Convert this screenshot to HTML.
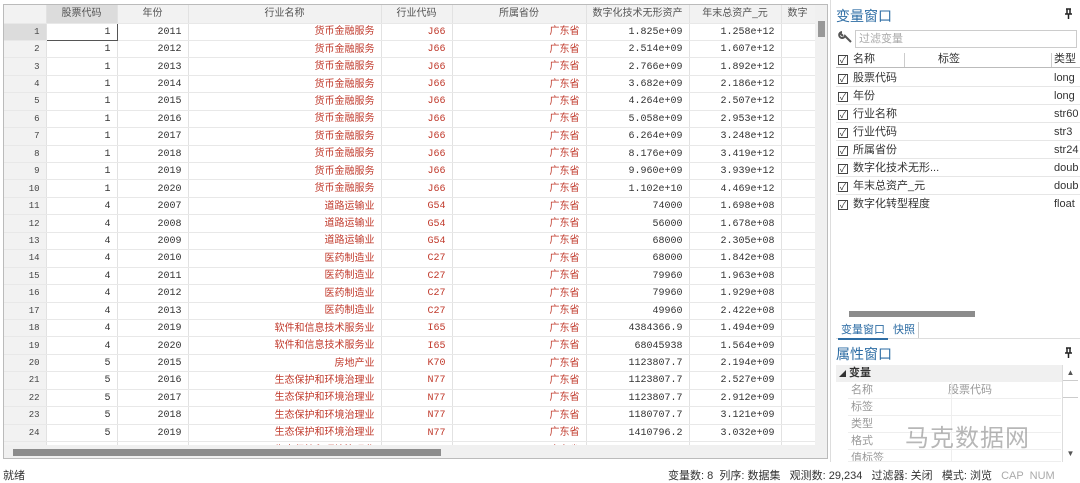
<!DOCTYPE html>
<html><head><meta charset="utf-8"><style>
*{margin:0;padding:0;box-sizing:border-box}
body{width:1080px;height:482px;overflow:hidden;background:#fff;font-family:"Liberation Sans","Noto Sans CJK SC",sans-serif;font-size:11px;color:#333;position:relative}
.grid{position:absolute;left:3px;top:4px;width:825px;height:455px;border:1px solid #bbb;overflow:hidden;background:#fff}
table{border-collapse:collapse;table-layout:fixed;position:absolute;left:0;top:0}
tr{height:17.45px}
td,th{line-height:11px;vertical-align:middle;border-right:1px solid #e2e2e2;border-bottom:1px solid #e8e8e8;padding:1px 6px 0;white-space:nowrap;overflow:hidden;font-weight:normal;font-size:10px;text-align:right;font-family:"Liberation Mono","Noto Sans CJK SC",monospace}
th{background:#f2f2f2;color:#555;text-align:center;font-family:"Liberation Sans","Noto Sans CJK SC",sans-serif;padding:0 6px}
tr.h{height:18px}
td.rn{background:#f2f2f2;color:#444;font-size:9px}
td.r{color:#c0392b;font-family:"Noto Sans CJK SC",sans-serif;padding:0 6px 4px}
td.c{color:#c0392b}
.vs{position:absolute;left:811px;top:0;width:13px;height:440px;background:#f0f0f0}
.vs div{position:absolute;left:3px;top:16px;width:7px;height:16px;background:#999}
.hs{position:absolute;left:0;top:440px;width:824px;height:14px;background:#f0f0f0}
.hs div{position:absolute;left:9px;top:4px;width:428px;height:7px;background:#8c8c8c}
.blue{color:#2e6da4;font-size:14px}
.status{position:absolute;left:0;top:463px;width:1080px;height:19px;font-size:11px;color:#333}
.vrow{position:absolute;left:836px;width:244px;height:18px;border-bottom:1px solid #e6e6e6;font-size:11px;line-height:18px}
.cb{display:inline-block;width:10px;height:10px;border:1px solid #444;margin:0 5px 0 2px;vertical-align:-1px;font-size:9px;line-height:8px;text-align:center}
.prow{position:absolute;left:848px;width:213px;height:17px;border-bottom:1px solid #eee;font-size:11px;color:#999;line-height:17px;padding-left:3px}
</style></head><body>
<div class="grid">
<table>
<colgroup><col style="width:42px"><col style="width:71px"><col style="width:71px"><col style="width:193px"><col style="width:71px"><col style="width:134px"><col style="width:100px"><col style="width:92px"><col style="width:40px"></colgroup>
<tr class="h"><th></th><th style="background:#dcdcdc">股票代码</th><th>年份</th><th>行业名称</th><th>行业代码</th><th>所属省份</th><th>数字化技术无形资产</th><th>年末总资产_元</th><th style="text-align:left">数字</th></tr>
<tr><td class="rn" style="background:#dcdcdc">1</td><td style="border:1.5px solid #555">1</td><td>2011</td><td class="r">货币金融服务</td><td class="c">J66</td><td class="r">广东省</td><td>1.825e+09</td><td>1.258e+12</td><td></td></tr>
<tr><td class="rn">2</td><td>1</td><td>2012</td><td class="r">货币金融服务</td><td class="c">J66</td><td class="r">广东省</td><td>2.514e+09</td><td>1.607e+12</td><td></td></tr>
<tr><td class="rn">3</td><td>1</td><td>2013</td><td class="r">货币金融服务</td><td class="c">J66</td><td class="r">广东省</td><td>2.766e+09</td><td>1.892e+12</td><td></td></tr>
<tr><td class="rn">4</td><td>1</td><td>2014</td><td class="r">货币金融服务</td><td class="c">J66</td><td class="r">广东省</td><td>3.682e+09</td><td>2.186e+12</td><td></td></tr>
<tr><td class="rn">5</td><td>1</td><td>2015</td><td class="r">货币金融服务</td><td class="c">J66</td><td class="r">广东省</td><td>4.264e+09</td><td>2.507e+12</td><td></td></tr>
<tr><td class="rn">6</td><td>1</td><td>2016</td><td class="r">货币金融服务</td><td class="c">J66</td><td class="r">广东省</td><td>5.058e+09</td><td>2.953e+12</td><td></td></tr>
<tr><td class="rn">7</td><td>1</td><td>2017</td><td class="r">货币金融服务</td><td class="c">J66</td><td class="r">广东省</td><td>6.264e+09</td><td>3.248e+12</td><td></td></tr>
<tr><td class="rn">8</td><td>1</td><td>2018</td><td class="r">货币金融服务</td><td class="c">J66</td><td class="r">广东省</td><td>8.176e+09</td><td>3.419e+12</td><td></td></tr>
<tr><td class="rn">9</td><td>1</td><td>2019</td><td class="r">货币金融服务</td><td class="c">J66</td><td class="r">广东省</td><td>9.960e+09</td><td>3.939e+12</td><td></td></tr>
<tr><td class="rn">10</td><td>1</td><td>2020</td><td class="r">货币金融服务</td><td class="c">J66</td><td class="r">广东省</td><td>1.102e+10</td><td>4.469e+12</td><td></td></tr>
<tr><td class="rn">11</td><td>4</td><td>2007</td><td class="r">道路运输业</td><td class="c">G54</td><td class="r">广东省</td><td>74000</td><td>1.698e+08</td><td></td></tr>
<tr><td class="rn">12</td><td>4</td><td>2008</td><td class="r">道路运输业</td><td class="c">G54</td><td class="r">广东省</td><td>56000</td><td>1.678e+08</td><td></td></tr>
<tr><td class="rn">13</td><td>4</td><td>2009</td><td class="r">道路运输业</td><td class="c">G54</td><td class="r">广东省</td><td>68000</td><td>2.305e+08</td><td></td></tr>
<tr><td class="rn">14</td><td>4</td><td>2010</td><td class="r">医药制造业</td><td class="c">C27</td><td class="r">广东省</td><td>68000</td><td>1.842e+08</td><td></td></tr>
<tr><td class="rn">15</td><td>4</td><td>2011</td><td class="r">医药制造业</td><td class="c">C27</td><td class="r">广东省</td><td>79960</td><td>1.963e+08</td><td></td></tr>
<tr><td class="rn">16</td><td>4</td><td>2012</td><td class="r">医药制造业</td><td class="c">C27</td><td class="r">广东省</td><td>79960</td><td>1.929e+08</td><td></td></tr>
<tr><td class="rn">17</td><td>4</td><td>2013</td><td class="r">医药制造业</td><td class="c">C27</td><td class="r">广东省</td><td>49960</td><td>2.422e+08</td><td></td></tr>
<tr><td class="rn">18</td><td>4</td><td>2019</td><td class="r">软件和信息技术服务业</td><td class="c">I65</td><td class="r">广东省</td><td>4384366.9</td><td>1.494e+09</td><td></td></tr>
<tr><td class="rn">19</td><td>4</td><td>2020</td><td class="r">软件和信息技术服务业</td><td class="c">I65</td><td class="r">广东省</td><td>68045938</td><td>1.564e+09</td><td></td></tr>
<tr><td class="rn">20</td><td>5</td><td>2015</td><td class="r">房地产业</td><td class="c">K70</td><td class="r">广东省</td><td>1123807.7</td><td>2.194e+09</td><td></td></tr>
<tr><td class="rn">21</td><td>5</td><td>2016</td><td class="r">生态保护和环境治理业</td><td class="c">N77</td><td class="r">广东省</td><td>1123807.7</td><td>2.527e+09</td><td></td></tr>
<tr><td class="rn">22</td><td>5</td><td>2017</td><td class="r">生态保护和环境治理业</td><td class="c">N77</td><td class="r">广东省</td><td>1123807.7</td><td>2.912e+09</td><td></td></tr>
<tr><td class="rn">23</td><td>5</td><td>2018</td><td class="r">生态保护和环境治理业</td><td class="c">N77</td><td class="r">广东省</td><td>1180707.7</td><td>3.121e+09</td><td></td></tr>
<tr><td class="rn">24</td><td>5</td><td>2019</td><td class="r">生态保护和环境治理业</td><td class="c">N77</td><td class="r">广东省</td><td>1410796.2</td><td>3.032e+09</td><td></td></tr>
<tr><td class="rn">25</td><td>5</td><td>2020</td><td class="r">生态保护和环境治理业</td><td class="c">N77</td><td class="r">广东省</td><td>1410796.2</td><td>3.032e+09</td><td></td></tr>
</table>
<div class="vs"><div></div></div>
<div class="hs"><div></div></div>
</div>

<div style="position:absolute;left:830px;top:0;width:1px;height:462px;background:#ddd"></div>
<div class="blue" style="position:absolute;left:836px;top:6px">变量窗口</div>
<svg style="position:absolute;left:1064px;top:8px" width="9" height="12" viewBox="0 0 9 12"><path d="M2 1h5M3 1v5M6 1v5M1 6h7M4.5 6v5" stroke="#222" stroke-width="1.5" fill="none"/></svg>
<svg style="position:absolute;left:838px;top:31px" width="14" height="14" viewBox="0 0 14 14"><path d="M2 2l3 3M4 1a3 3 0 1 0 3 4l6 6" stroke="#555" stroke-width="2" fill="none"/></svg>
<div style="position:absolute;left:855px;top:30px;width:222px;height:18px;border:1px solid #ccc;color:#aaa;font-size:11px;line-height:16px;padding-left:3px">过滤变量</div>
<div style="position:absolute;left:836px;top:51px;width:244px;height:17px;font-size:11px;line-height:17px;border-bottom:1px solid #bbb">
<span class="cb">✓</span>名称<span style="position:absolute;left:68px;top:2px;height:14px;border-left:1px solid #ccc"></span><span style="position:absolute;left:102px">标签</span><span style="position:absolute;left:215px;top:2px;height:14px;border-left:1px solid #ccc"></span><span style="position:absolute;left:218px">类型</span></div>
<div class="vrow" style="top:69px"><span class="cb">✓</span>股票代码<span style="position:absolute;left:218px">long</span></div>
<div class="vrow" style="top:87px"><span class="cb">✓</span>年份<span style="position:absolute;left:218px">long</span></div>
<div class="vrow" style="top:105px"><span class="cb">✓</span>行业名称<span style="position:absolute;left:218px">str60</span></div>
<div class="vrow" style="top:123px"><span class="cb">✓</span>行业代码<span style="position:absolute;left:218px">str3</span></div>
<div class="vrow" style="top:141px"><span class="cb">✓</span>所属省份<span style="position:absolute;left:218px">str24</span></div>
<div class="vrow" style="top:159px"><span class="cb">✓</span>数字化技术无形...<span style="position:absolute;left:218px">doub</span></div>
<div class="vrow" style="top:177px"><span class="cb">✓</span>年末总资产_元<span style="position:absolute;left:218px">doub</span></div>
<div class="vrow" style="top:195px;border:none"><span class="cb">✓</span>数字化转型程度<span style="position:absolute;left:218px">float</span></div>
<div style="position:absolute;left:849px;top:311px;width:126px;height:6px;background:#8c8c8c"></div>
<div style="position:absolute;left:836px;top:322px;width:244px;height:17px;border-bottom:1px solid #ddd;font-size:11px;line-height:16px">
<span style="position:absolute;left:2px;padding:0 3px;color:#2e6da4;border-bottom:2px solid #2e6da4">变量窗口</span><span style="position:absolute;left:54px;padding:0 3px;color:#2e6da4;border-right:1px solid #ccc">快照</span></div>
<div class="blue" style="position:absolute;left:836px;top:344px">属性窗口</div>
<svg style="position:absolute;left:1064px;top:347px" width="9" height="12" viewBox="0 0 9 12"><path d="M2 1h5M3 1v5M6 1v5M1 6h7M4.5 6v5" stroke="#222" stroke-width="1.5" fill="none"/></svg>
<div style="position:absolute;left:836px;top:365px;width:226px;height:17px;background:#f0f0f0;font-size:11px;font-weight:bold;line-height:17px;padding-left:3px"><span style="font-size:7px">◢</span> 变量</div>
<div class="prow" style="top:382px">名称<span style="position:absolute;left:100px">股票代码</span></div>
<div class="prow" style="top:399px">标签</div>
<div class="prow" style="top:416px">类型</div>
<div class="prow" style="top:433px">格式</div>
<div class="prow" style="top:450px;height:12px;overflow:hidden">值标签</div>
<div style="position:absolute;left:951px;top:382px;width:1px;height:80px;background:#eee"></div>
<div style="position:absolute;left:1062px;top:365px;width:16px;height:97px;background:#fff;border-left:1px solid #ddd;font-size:8px;color:#555;text-align:center">
<div style="height:16px;border-bottom:1px solid #ccc;line-height:16px">▲</div><div style="height:17px;border-bottom:1px solid #ccc"></div><div style="position:absolute;top:82px;width:15px;line-height:14px">▼</div></div>
<div style="position:absolute;left:905px;top:418px;font-size:24px;color:#888;opacity:.6;letter-spacing:1px">马克数据网</div>

<div class="status">
<span style="position:absolute;left:3px;top:4px">就绪</span>
<span style="position:absolute;left:668px;top:4px">变量数: 8 &nbsp;列序: 数据集 &nbsp;&nbsp;观测数: 29,234 &nbsp;&nbsp;过滤器: 关闭 &nbsp;&nbsp;模式: 浏览 &nbsp;&nbsp;<span style="color:#aaa">CAP &nbsp;NUM</span></span>
</div>
</body></html>
